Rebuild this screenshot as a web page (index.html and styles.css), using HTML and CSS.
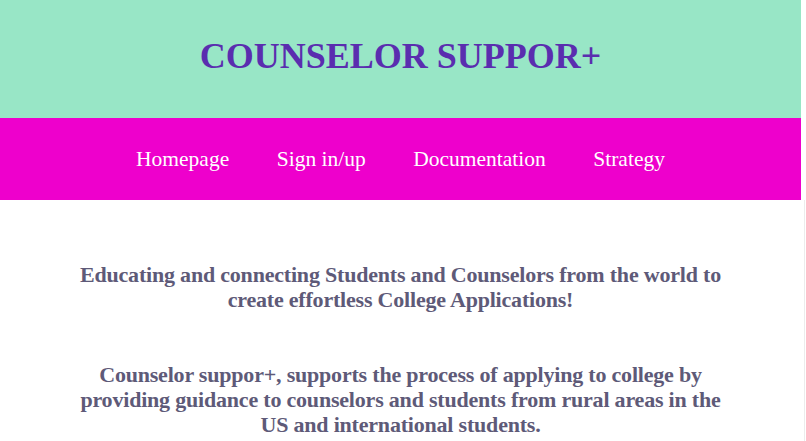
FILE: index.html
```html
<!DOCTYPE html>
<html>
<head>
<meta charset="utf-8">
<link rel="stylesheet" href="styles.css">
</head>
<body>
<div class="page">
  <header class="top">
    <h1 class="title">COUNSELOR SUPPOR+</h1>
  </header>
  <nav class="nav">
    <a class="nav-link" href="#">Homepage</a>
    <a class="nav-link" href="#">Sign in/up</a>
    <a class="nav-link" href="#">Documentation</a>
    <a class="nav-link" href="#">Strategy</a>
  </nav>
  <main class="content">
    <p class="lead">Educating and connecting Students and Counselors from the world to create effortless College Applications!</p>
    <p class="about">Counselor suppor+, supports the process of applying to college by providing guidance to counselors and students from rural areas in the US and international students.</p>
  </main>
</div>
<div class="edge"></div>
</body>
</html>
```
FILE: styles.css
```css
html, body {
  margin: 0;
  padding: 0;
  background: #ffffff;
}
body {
  font-family: "Liberation Serif", "Times New Roman", serif;
  overflow: hidden;
}
.page {
  width: 801px;
}
.top {
  height: 118px;
  background: #98e6c6;
  display: flex;
  align-items: center;
  justify-content: center;
}
.title {
  margin: 0;
  font-size: 36px;
  font-weight: bold;
  color: #5a2daf;
  padding-bottom: 6px;
}
.nav {
  height: 82px;
  background: #ee00cc;
  display: flex;
  align-items: center;
  justify-content: center;
  gap: 47.5px;
}
.nav-link {
  color: #ffffff;
  text-decoration: none;
  font-size: 21.5px;
}
.content {
  width: 660px;
  margin: 0 auto;
  text-align: center;
  color: #5e5a78;
  font-weight: bold;
  padding-top: 62px;
}
.lead {
  margin: 0;
  font-size: 22px;
  line-height: 25px;
  letter-spacing: -0.2px;
}
.about {
  margin: 50px 0 0;
  font-size: 22px;
  line-height: 25px;
  letter-spacing: -0.2px;
}
.edge {
  position: fixed;
  left: 804px;
  top: 200px;
  width: 1px;
  height: 241px;
  background: #ececec;
}
```
